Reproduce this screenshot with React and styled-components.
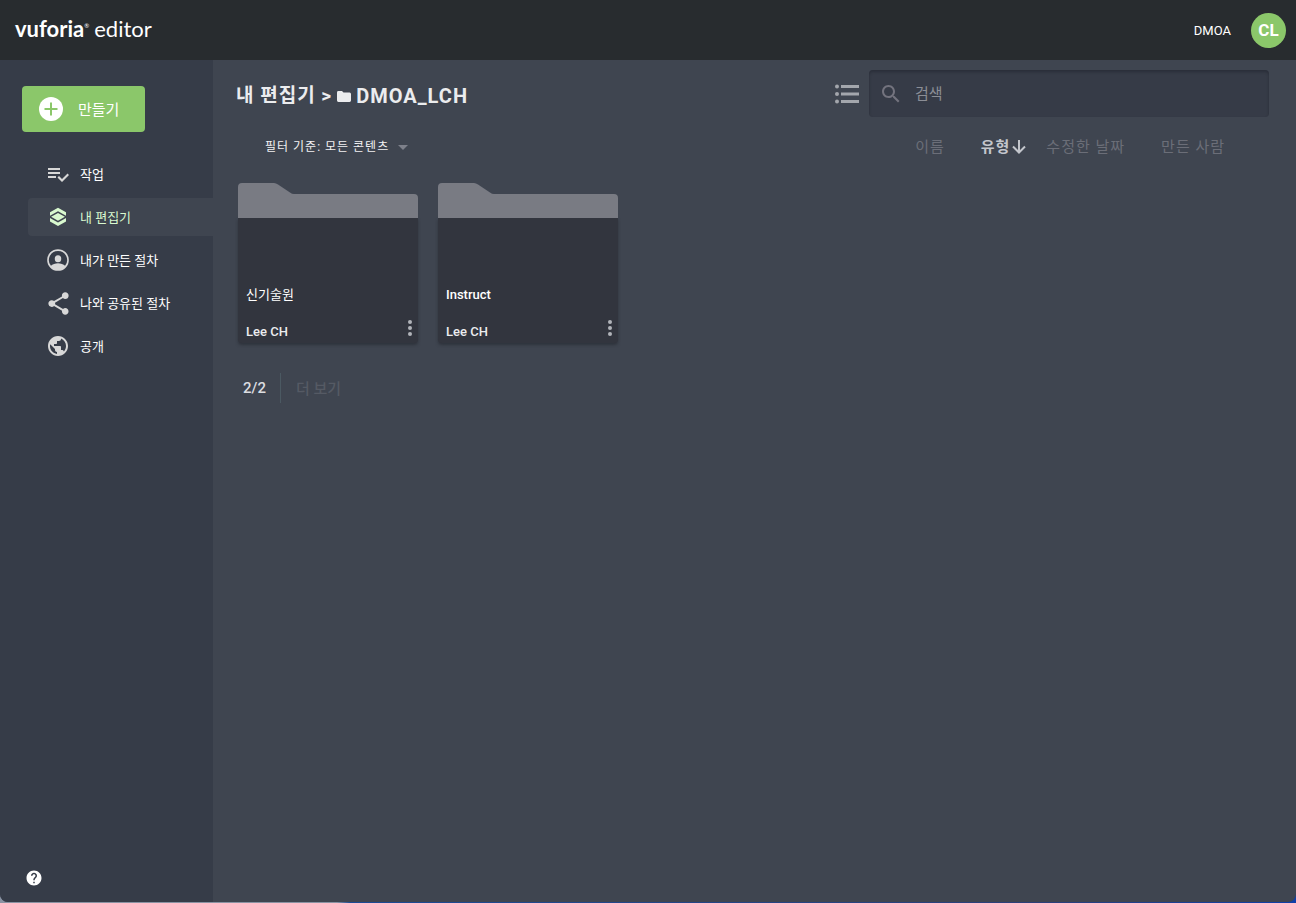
import React from 'react';
import styled, { createGlobalStyle } from 'styled-components';

const GlobalStyle = createGlobalStyle`
  * {
    box-sizing: border-box;
  }

  body {
    margin: 0;
    background: linear-gradient(90deg, #8a93a3 0, #8a93a3 26%, #1c4a94 27%, #2c3f78 80%, #0f3fa8 100%);
    font-family: Roboto, 'Noto Sans CJK KR', sans-serif;
    color: #fff;
  }

  button,
  input,
  select {
    font-family: inherit;
  }

  svg {
    display: block;
    flex: none;
  }
`;

const Window = styled.div`
  display: flex;
  flex-direction: column;
  height: calc(100vh - 1px);
  overflow: hidden;
  border-radius: 0 0 8px 8px;
  background: #3f4550;
`;

const TopBar = styled.header`
  display: flex;
  align-items: center;
  justify-content: space-between;
  height: 60px;
  flex: none;
  padding: 0 10px 0 15px;
  background: #282c2f;
`;

const Logo = styled.a`
  display: flex;
  gap: 5px;
  padding-bottom: 3px;
  font-family: Lato, sans-serif;
  font-size: 22px;
  line-height: 28px;
  color: #fff;
  text-decoration: none;
`;

const LogoName = styled.span`
  display: flex;
  font-weight: 700;
`;

const LogoMark = styled.sup`
  font-size: 6px;
  font-weight: 400;
  line-height: 22px;
`;

const LogoProduct = styled.span`
  font-weight: 400;
`;

const Account = styled.div`
  display: flex;
  align-items: center;
  gap: 20px;
  font-size: 13px;
`;

const Avatar = styled.button`
  width: 35px;
  height: 35px;
  padding: 0;
  border: none;
  border-radius: 50%;
  background: #8bc76a;
  color: #fff;
  font-size: 17px;
  font-weight: 700;
  cursor: pointer;
`;

const Body = styled.div`
  display: flex;
  flex: 1;
  min-height: 0;
`;

const Sidebar = styled.aside`
  display: flex;
  flex-direction: column;
  width: 213px;
  flex: none;
  padding-top: 26px;
  background: #363c48;
`;

const CreateButton = styled.button`
  display: flex;
  align-items: center;
  align-self: flex-start;
  gap: 15px;
  height: 46px;
  margin-left: 22px;
  padding: 0 26px 0 17px;
  border: none;
  border-radius: 4px;
  background: #8bc76a;
  color: #fff;
  font-size: 15px;
  cursor: pointer;
`;

const Nav = styled.nav`
  display: flex;
  flex-direction: column;
  gap: 5px;
  margin: 23px 0 0 28px;
`;

const NavItem = styled.a`
  display: flex;
  align-items: center;
  gap: 8px;
  height: 38px;
  padding-left: 16px;
  border-radius: 4px 0 0 4px;
  background: ${(props) => (props.$active ? '#3f4550' : 'transparent')};
  color: ${(props) => (props.$active ? '#d9f9cf' : '#fff')};
  font-size: 13px;
  text-decoration: none;
`;

const NavIcon = styled.span`
  display: flex;
  align-items: center;
  justify-content: center;
  width: 28px;
  color: ${(props) => (props.$active ? '#d9f9cf' : '#d8d8d8')};
`;

const Label = styled.span`
  padding-bottom: 2px;
`;

const HelpButton = styled.button`
  align-self: flex-start;
  margin: auto 0 15px 25px;
  padding: 0;
  border: none;
  background: none;
  color: #fff;
  cursor: pointer;
`;

const Main = styled.main`
  flex: 1;
  min-width: 0;
  padding: 10px 27px 0 23px;
`;

const HeaderRow = styled.div`
  display: flex;
  align-items: center;
  height: 47px;
`;

const Breadcrumb = styled.h1`
  display: flex;
  align-items: center;
  gap: 5px;
  flex: 1;
  margin: 0;
  padding-top: 4px;
  font-size: 19px;
  font-weight: 700;
  line-height: 28px;
  letter-spacing: 1px;
  color: #ebecee;
`;

const FolderName = styled.span`
  font-size: 20px;
`;

const IconButton = styled.button`
  padding: 0;
  border: none;
  background: none;
  color: #a3a6ac;
  cursor: pointer;
`;

const SearchBox = styled.label`
  display: flex;
  align-items: center;
  gap: 12px;
  width: 400px;
  height: 47px;
  margin-left: 9px;
  padding: 0 10px;
  border-radius: 4px;
  background: #363b47;
  box-shadow: inset 0 2px 3px rgba(20, 24, 32, 0.35);
  color: #73737e;
`;

const SearchInput = styled.input`
  flex: 1;
  min-width: 0;
  padding: 0;
  border: none;
  outline: none;
  background: none;
  color: #fff;
  font-size: 15px;

  &::placeholder {
    color: #8b8e96;
    opacity: 1;
  }
`;

const ToolRow = styled.div`
  display: flex;
  align-items: center;
  justify-content: space-between;
  height: 58px;
  padding: 2px 28px 0 29px;
`;

const Filter = styled.label`
  display: flex;
  align-items: center;
  gap: 8px;
  color: #7d808a;
`;

const FilterSelect = styled.select`
  appearance: none;
  padding: 0;
  border: none;
  background: none;
  color: #f2f2f3;
  font-size: 12px;
  letter-spacing: 1px;
`;

const SortBar = styled.div`
  display: flex;
  gap: 20px;
`;

const SortButton = styled.button`
  display: flex;
  align-items: center;
  padding: 0 ${(props) => (props.$active ? 0 : 16)}px 0 0;
  border: none;
  background: none;
  color: ${(props) => (props.$active ? '#c3c6cc' : '#6b6e78')};
  font-size: 15px;
  font-weight: ${(props) => (props.$active ? 700 : 400)};
  line-height: 20px;
  letter-spacing: 1px;
  cursor: pointer;
`;

const CardGrid = styled.section`
  display: flex;
  flex-wrap: wrap;
  gap: 20px;
  padding: 8px 2px 0;
`;

const Card = styled.article`
  width: 180px;
`;

const CardBody = styled.div`
  display: flex;
  flex-direction: column;
  justify-content: flex-end;
  height: 125px;
  padding-left: 8px;
  border-radius: 0 0 4px 4px;
  background: #32353e;
  box-shadow: 0 2px 3px rgba(30, 33, 40, 0.5);
`;

const CardTitle = styled.h2`
  margin: 0 0 15px;
  font-size: 13px;
  font-weight: 500;
  line-height: 16px;

  &:lang(ko) {
    font-weight: 400;
  }
`;

const CardFooter = styled.div`
  display: flex;
  align-items: center;
  justify-content: space-between;
  height: 25px;
  padding-top: 2px;
  font-size: 13px;
  font-weight: 500;
  color: #ebecee;
`;

const MenuButton = styled(IconButton)`
  height: 30px;
  width: 16px;
  color: #b2b4ba;
`;

const Pager = styled.div`
  display: flex;
  align-items: center;
  height: 30px;
  margin: 30px 0 0 7px;
  font-size: 15px;
  font-weight: 500;
  color: #dcdde0;
`;

const MoreButton = styled.button`
  height: 30px;
  margin-left: 14px;
  padding: 0 0 2px 15px;
  border: none;
  border-left: 1px solid #4b5962;
  background: none;
  color: #555a64;
  font-size: 15px;
  font-weight: 500;
`;

function Icon({ d, size = 24 }) {
  return (
    <svg width={size} height={size} viewBox="0 0 24 24" fill="currentColor" aria-hidden="true">
      <path d={d} />
    </svg>
  );
}

const icons = {
  tasks:
    'M14 10H2v2h12v-2zm0-4H2v2h12V6zM2 16h8v-2H2v2zm19.5-4.5L23 13l-6.99 7-4.51-4.5L13 14l3.01 3 5.49-5.5z',
  editor:
    'M12 2.7l8 4.5v3.5l-8-4.5-8 4.500V7.200zM12 7.900l6.900 3.900-6.900 3.900-6.900-3.900zM4 12.900l8 4.500 8-4.500v3.500l-8 4.500-8-4.500z',
  person:
    'M12 2a10 10 0 1 0 0 20 10 10 0 0 0 0-20zm0 1.600a8.400 8.400 0 0 1 6.500 13.700C17.300 15.800 14.300 15 12 15s-5.300.8-6.500 2.300A8.400 8.400 0 0 1 12 3.600zM12 7.500a3 3.300 0 1 0 0 6.600 3 3.300 0 0 0 0-6.600z',
  share:
    'M18 16.08c-.76 0-1.44.3-1.96.77L8.91 12.7c.05-.23.09-.46.09-.7s-.04-.47-.09-.7l7.05-4.11c.54.5 1.25.81 2.04.81 1.66 0 3-1.34 3-3s-1.34-3-3-3-3 1.34-3 3c0 .24.04.47.09.7L8.04 9.81C7.5 9.31 6.79 9 6 9c-1.66 0-3 1.34-3 3s1.34 3 3 3c.79 0 1.5-.31 2.04-.81l7.12 4.16c-.05.21-.08.43-.08.65 0 1.61 1.31 2.92 2.92 2.92s2.92-1.31 2.92-2.92-1.31-2.92-2.92-2.92z',
  globe:
    'M12 2C6.48 2 2 6.48 2 12s4.48 10 10 10 10-4.48 10-10S17.52 2 12 2zm-1 17.93c-3.95-.49-7-3.85-7-7.93 0-.62.08-1.21.21-1.79L9 15v1c0 1.1.9 2 2 2v1.93zm6.9-2.54c-.26-.81-1-1.39-1.9-1.39h-1v-3c0-.55-.45-1-1-1H8v-2h2c.55 0 1-.45 1-1V7h2c1.1 0 2-.9 2-2v-.41c2.93 1.19 5 4.06 5 7.41 0 2.08-.8 3.97-2.1 5.39z',
  help: 'M12 2C6.48 2 2 6.48 2 12s4.48 10 10 10 10-4.48 10-10S17.52 2 12 2zm1 17h-2v-2h2v2zm2.07-7.75l-.9.92C13.45 12.9 13 13.5 13 15h-2v-.5c0-1.1.45-2.1 1.17-2.83l1.24-1.26c.37-.36.59-.86.59-1.41 0-1.1-.9-2-2-2s-2 .9-2 2H8c0-2.21 1.79-4 4-4s4 1.79 4 4c0 .88-.36 1.68-.93 2.25z',
  search:
    'M15.5 14h-.79l-.28-.27C15.41 12.59 16 11.11 16 9.5 16 5.91 13.09 3 9.5 3S3 5.91 3 9.5 5.91 16 9.5 16c1.61 0 3.09-.59 4.23-1.57l.27.28v.79l5 4.99L20.49 19l-4.99-5zm-6 0C7.01 14 5 11.99 5 9.5S7.01 5 9.5 5 14 7.01 14 9.5 11.99 14 9.5 14z',
};

const navItems = [
  { label: '작업', icon: 'tasks', size: 24 },
  { label: '내 편집기', icon: 'editor', size: 24, active: true },
  { label: '내가 만든 절차', icon: 'person', size: 26 },
  { label: '나와 공유된 절차', icon: 'share', size: 27 },
  { label: '공개', icon: 'globe', size: 24 },
];

const sortFields = ['이름', '유형', '수정한 날짜', '만든 사람'];

const folders = [
  { name: '신기술원', lang: 'ko', owner: 'Lee CH' },
  { name: 'Instruct', lang: 'en', owner: 'Lee CH' },
];

function FolderCard({ name, lang, owner }) {
  return (
    <Card>
      <svg width="180" height="35" viewBox="0 0 180 35" aria-hidden="true">
        <path d="M0 4a4 4 0 0 1 4-4h32q2 0 4 1.500L52 9.500q2 1.500 4 1.500h120a4 4 0 0 1 4 4v20H0z" fill="#797b83" />
      </svg>
      <CardBody>
        <CardTitle lang={lang}>{name}</CardTitle>
        <CardFooter>
          {owner}
          <MenuButton aria-label={`${name} 메뉴`}>
            <svg width="16" height="24" viewBox="0 0 16 24" fill="currentColor">
              <circle cx="8" cy="2" r="2" />
              <circle cx="8" cy="8" r="2" />
              <circle cx="8" cy="14" r="2" />
            </svg>
          </MenuButton>
        </CardFooter>
      </CardBody>
    </Card>
  );
}

function App() {
  return (
    <Window>
      <GlobalStyle />
      <TopBar>
        <Logo href="#">
          <LogoName>
            vuforia<LogoMark>®</LogoMark>
          </LogoName>
          <LogoProduct>editor</LogoProduct>
        </Logo>
        <Account>
          <span>DMOA</span>
          <Avatar>CL</Avatar>
        </Account>
      </TopBar>
      <Body>
        <Sidebar>
          <CreateButton>
            <svg width="24" height="24" viewBox="0 0 24 24" aria-hidden="true">
              <circle cx="12" cy="12" r="12" fill="#fff" />
              <path d="M12 5.500v13M5.500 12h13" stroke="#8bc76a" strokeWidth="2" />
            </svg>
            <Label>만들기</Label>
          </CreateButton>
          <Nav>
            {navItems.map((item) => (
              <NavItem key={item.label} href="#" $active={item.active}>
                <NavIcon $active={item.active}>
                  <Icon d={icons[item.icon]} size={item.size} />
                </NavIcon>
                <Label>{item.label}</Label>
              </NavItem>
            ))}
          </Nav>
          <HelpButton aria-label="도움말">
            <Icon d={icons.help} size={18} />
          </HelpButton>
        </Sidebar>
        <Main>
          <HeaderRow>
            <Breadcrumb>
              <span>내 편집기 &gt;</span>
              <svg width="14" height="12" viewBox="0 0 14 12" fill="currentColor" aria-hidden="true">
                <path d="M1.400 1H5l1.500 1.500h6.100Q14 2.500 14 4v6.600q0 1.400-1.400 1.400H1.400Q0 12 0 10.600V2.400Q0 1 1.400 1z" />
              </svg>
              <FolderName>DMOA_LCH</FolderName>
            </Breadcrumb>
            <IconButton aria-label="목록 보기">
              <svg width="25" height="20" viewBox="0 0 25 20" fill="currentColor">
                <circle cx="2" cy="2.500" r="2" />
                <circle cx="2" cy="10" r="2" />
                <circle cx="2" cy="17.500" r="2" />
                <path d="M6 1h18v3H6zM6 8.500h18v3H6zM6 16h18v3H6z" />
              </svg>
            </IconButton>
            <SearchBox>
              <Icon d={icons.search} size={24} />
              <SearchInput type="text" placeholder="검색" aria-label="검색" />
            </SearchBox>
          </HeaderRow>
          <ToolRow>
            <Filter>
              <FilterSelect aria-label="필터">
                <option>필터 기준: 모든 콘텐츠</option>
              </FilterSelect>
              <svg width="10" height="5" viewBox="0 0 10 5" fill="currentColor" aria-hidden="true">
                <path d="M0 0h10L5 5z" />
              </svg>
            </Filter>
            <SortBar>
              {sortFields.map((field) => (
                <SortButton key={field} $active={field === '유형'}>
                  {field}
                  {field === '유형' && (
                    <svg width="16" height="16" viewBox="0 0 16 16" fill="none" stroke="currentColor" strokeWidth="2" aria-hidden="true">
                      <path d="M9 1v12M3 7.500l6 6 6-6" />
                    </svg>
                  )}
                </SortButton>
              ))}
            </SortBar>
          </ToolRow>
          <CardGrid>
            {folders.map((folder) => (
              <FolderCard key={folder.name} {...folder} />
            ))}
          </CardGrid>
          <Pager>
            2/2
            <MoreButton disabled>더 보기</MoreButton>
          </Pager>
        </Main>
      </Body>
    </Window>
  );
}

export default App;
